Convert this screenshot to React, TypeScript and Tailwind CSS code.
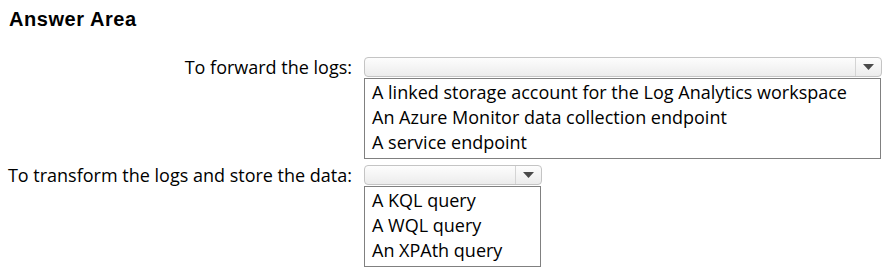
import React from "react";

function Select({ width }: { width: string }) {
  return (
    <div
      className={`${width} h-[20px] rounded-[4px] border border-[#c4c4c4] bg-gradient-to-b from-[#fdfdfd] to-[#ececec] flex justify-end`}
    >
      <div className="w-[26px] h-full border-l border-[#d4d4d4] flex items-center justify-center">
        <svg width="11" height="6" viewBox="0 0 11 6">
          <polygon points="0,0 11,0 5.5,6" fill="#4a4a4a" />
        </svg>
      </div>
    </div>
  );
}

function List({ width, items }: { width: string; items: string[] }) {
  return (
    <div className={`${width} mt-[1px] border border-[#808080] bg-white pl-[7px] pt-[1px] pb-[3px]`}>
      {items.map((t) => (
        <div key={t} className="h-[25px] leading-[25px] text-[18px] text-black whitespace-nowrap">
          {t}
        </div>
      ))}
    </div>
  );
}

function Label({ text }: { text: string }) {
  return (
    <div className="w-[343px] flex justify-end text-[18px] leading-[20px] text-black whitespace-nowrap">
      <span>{text}</span>
    </div>
  );
}

export default function App() {
  return (
    <div
      className="w-[886px] h-[275px] bg-white pl-[9px] pt-[8px] overflow-hidden"
      style={{ fontFamily: '"Open Sans", "Noto Sans", sans-serif' }}
    >
      <h1
        className="font-bold text-[20px] leading-[23px] tracking-[0.55px] text-black"
        style={{ fontFamily: '"Liberation Sans", Arial, sans-serif' }}
      >
        Answer Area
      </h1>
      <div className="mt-[26px] flex items-start">
        <Label text="To forward the logs:" />
        <div className="ml-[12px]">
          <Select width="w-[518px]" />
          <List
            width="w-[517px]"
            items={[
              "A linked storage account for the Log Analytics workspace",
              "An Azure Monitor data collection endpoint",
              "A service endpoint",
            ]}
          />
        </div>
      </div>
      <div className="mt-[6px] flex items-start">
        <Label text="To transform the logs and store the data:" />
        <div className="ml-[12px]">
          <Select width="w-[178px]" />
          <List width="w-[177px]" items={["A KQL query", "A WQL query", "An XPAth query"]} />
        </div>
      </div>
    </div>
  );
}
